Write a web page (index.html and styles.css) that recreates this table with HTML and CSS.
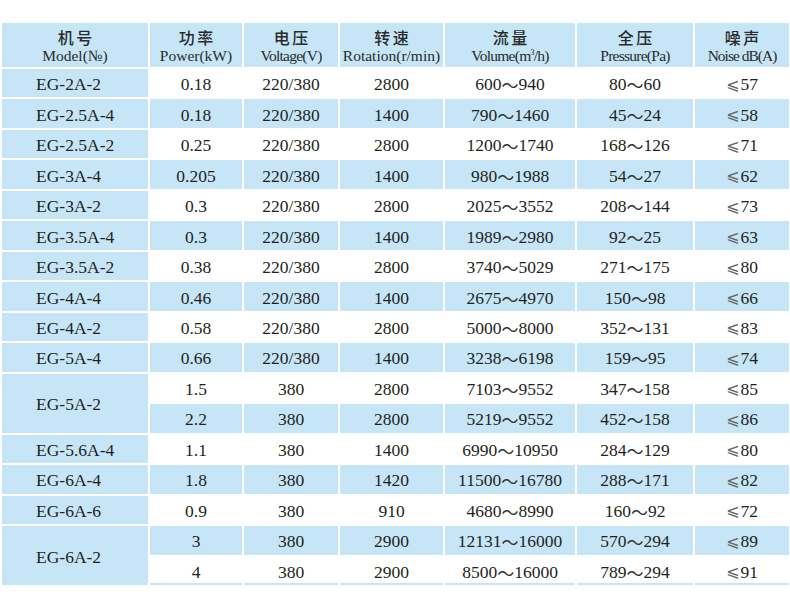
FILE: index.html
```html
<!DOCTYPE html>
<html lang="zh-CN">
<head>
<meta charset="utf-8">
<title>EG 参数表</title>
<link rel="stylesheet" href="styles.css">
</head>
<body>
<div class="spec">
  <div class="hd"><span class="zh">机号</span><span class="en">Model(№)</span></div>
  <div class="hd"><span class="zh">功率</span><span class="en">Power(kW)</span></div>
  <div class="hd"><span class="zh">电压</span><span class="en cond">Voltage(V)</span></div>
  <div class="hd"><span class="zh">转速</span><span class="en">Rotation(r/min)</span></div>
  <div class="hd"><span class="zh">流量</span><span class="en cond">Volume(m<sup>3</sup>/h)</span></div>
  <div class="hd"><span class="zh">全压</span><span class="en cond">Pressure(Pa)</span></div>
  <div class="hd"><span class="zh">噪声</span><span class="en cond2">Noise dB(A)</span></div>

  <div class="model">EG-2A-2</div>
  <div class="c">0.18</div><div class="c">220/380</div><div class="c">2800</div><div class="c">600<span class="t">～</span>940</div><div class="c">80<span class="t">～</span>60</div><div class="c"><span class="le">⩽</span>57</div>

  <div class="model">EG-2.5A-4</div>
  <div class="c b">0.18</div><div class="c b">220/380</div><div class="c b">1400</div><div class="c b">790<span class="t">～</span>1460</div><div class="c b">45<span class="t">～</span>24</div><div class="c b"><span class="le">⩽</span>58</div>

  <div class="model">EG-2.5A-2</div>
  <div class="c">0.25</div><div class="c">220/380</div><div class="c">2800</div><div class="c">1200<span class="t">～</span>1740</div><div class="c">168<span class="t">～</span>126</div><div class="c"><span class="le">⩽</span>71</div>

  <div class="model">EG-3A-4</div>
  <div class="c b">0.205</div><div class="c b">220/380</div><div class="c b">1400</div><div class="c b">980<span class="t">～</span>1988</div><div class="c b">54<span class="t">～</span>27</div><div class="c b"><span class="le">⩽</span>62</div>

  <div class="model">EG-3A-2</div>
  <div class="c">0.3</div><div class="c">220/380</div><div class="c">2800</div><div class="c">2025<span class="t">～</span>3552</div><div class="c">208<span class="t">～</span>144</div><div class="c"><span class="le">⩽</span>73</div>

  <div class="model">EG-3.5A-4</div>
  <div class="c b">0.3</div><div class="c b">220/380</div><div class="c b">1400</div><div class="c b">1989<span class="t">～</span>2980</div><div class="c b">92<span class="t">～</span>25</div><div class="c b"><span class="le">⩽</span>63</div>

  <div class="model">EG-3.5A-2</div>
  <div class="c">0.38</div><div class="c">220/380</div><div class="c">2800</div><div class="c">3740<span class="t">～</span>5029</div><div class="c">271<span class="t">～</span>175</div><div class="c"><span class="le">⩽</span>80</div>

  <div class="model">EG-4A-4</div>
  <div class="c b">0.46</div><div class="c b">220/380</div><div class="c b">1400</div><div class="c b">2675<span class="t">～</span>4970</div><div class="c b">150<span class="t">～</span>98</div><div class="c b"><span class="le">⩽</span>66</div>

  <div class="model">EG-4A-2</div>
  <div class="c">0.58</div><div class="c">220/380</div><div class="c">2800</div><div class="c">5000<span class="t">～</span>8000</div><div class="c">352<span class="t">～</span>131</div><div class="c"><span class="le">⩽</span>83</div>

  <div class="model">EG-5A-4</div>
  <div class="c b">0.66</div><div class="c b">220/380</div><div class="c b">1400</div><div class="c b">3238<span class="t">～</span>6198</div><div class="c b">159<span class="t">～</span>95</div><div class="c b"><span class="le">⩽</span>74</div>

  <div class="model span2">EG-5A-2</div>
  <div class="c">1.5</div><div class="c">380</div><div class="c">2800</div><div class="c">7103<span class="t">～</span>9552</div><div class="c">347<span class="t">～</span>158</div><div class="c"><span class="le">⩽</span>85</div>
  <div class="c b">2.2</div><div class="c b">380</div><div class="c b">2800</div><div class="c b">5219<span class="t">～</span>9552</div><div class="c b">452<span class="t">～</span>158</div><div class="c b"><span class="le">⩽</span>86</div>

  <div class="model">EG-5.6A-4</div>
  <div class="c">1.1</div><div class="c">380</div><div class="c">1400</div><div class="c">6990<span class="t">～</span>10950</div><div class="c">284<span class="t">～</span>129</div><div class="c"><span class="le">⩽</span>80</div>

  <div class="model">EG-6A-4</div>
  <div class="c b">1.8</div><div class="c b">380</div><div class="c b">1420</div><div class="c b">11500<span class="t">～</span>16780</div><div class="c b">288<span class="t">～</span>171</div><div class="c b"><span class="le">⩽</span>82</div>

  <div class="model">EG-6A-6</div>
  <div class="c">0.9</div><div class="c">380</div><div class="c">910</div><div class="c">4680<span class="t">～</span>8990</div><div class="c">160<span class="t">～</span>92</div><div class="c"><span class="le">⩽</span>72</div>

  <div class="model span2">EG-6A-2</div>
  <div class="c b">3</div><div class="c b">380</div><div class="c b">2900</div><div class="c b">12131<span class="t">～</span>16000</div><div class="c b">570<span class="t">～</span>294</div><div class="c b"><span class="le">⩽</span>89</div>
  <div class="c last">4</div><div class="c last">380</div><div class="c last">2900</div><div class="c last">8500<span class="t">～</span>16000</div><div class="c last">789<span class="t">～</span>294</div><div class="c last"><span class="le">⩽</span>91</div>
</div>
</body>
</html>
```
FILE: styles.css
```css
html, body {
  margin: 0;
  padding: 0;
  background: #ffffff;
}

body {
  font-family: "Liberation Serif", serif;
  color: #231f20;
}

.spec {
  display: grid;
  grid-template-columns: 146px 92px 94px 103px 130px 116px 94px;
  grid-template-rows: 44px repeat(17, 28.47px);
  gap: 2px;
  margin: 23px 0 0 2px;
}

.hd {
  background: #c6e6f8;
  display: flex;
  flex-direction: column;
  align-items: center;
  justify-content: flex-start;
  padding-top: 5px;
  overflow: hidden;
}

.hd .zh {
  font-family: "Noto Sans CJK SC", sans-serif;
  font-weight: 500;
  font-size: 16px;
  line-height: 19px;
  letter-spacing: 2.5px;
  padding-left: 2.5px;
  color: #2a2a2a;
}

.hd .en {
  font-family: "Liberation Serif", serif;
  font-size: 15.5px;
  line-height: 16px;
  margin-top: 1px;
  color: #2a2a2a;
  white-space: nowrap;
}

.hd .cond {
  letter-spacing: -0.75px;
}

.hd .cond2 {
  letter-spacing: -1px;
}

.hd sup {
  font-size: 8px;
  vertical-align: 6px;
  line-height: 0;
}

.model {
  background: #c6e6f8;
  display: flex;
  align-items: center;
  padding: 3px 0 0 34px;
  font-size: 17.5px;
  white-space: nowrap;
}

.span2 {
  grid-row: span 2;
}

.c {
  display: flex;
  align-items: center;
  justify-content: center;
  padding-top: 3px;
  font-size: 17.5px;
  white-space: nowrap;
  background: #ffffff;
}

.c.b {
  background: #c6e6f8;
}

.c.last {
  box-shadow: inset 0 -2px 0 #c6e6f8;
}

.t {
  font-family: "Noto Sans CJK SC", sans-serif;
  font-size: 17px;
  line-height: 1;
  color: #333333;
}

.le {
  font-family: "DejaVu Sans", sans-serif;
  font-size: 16px;
  line-height: 1;
  color: #666666;
  margin-right: 1px;
}
```
